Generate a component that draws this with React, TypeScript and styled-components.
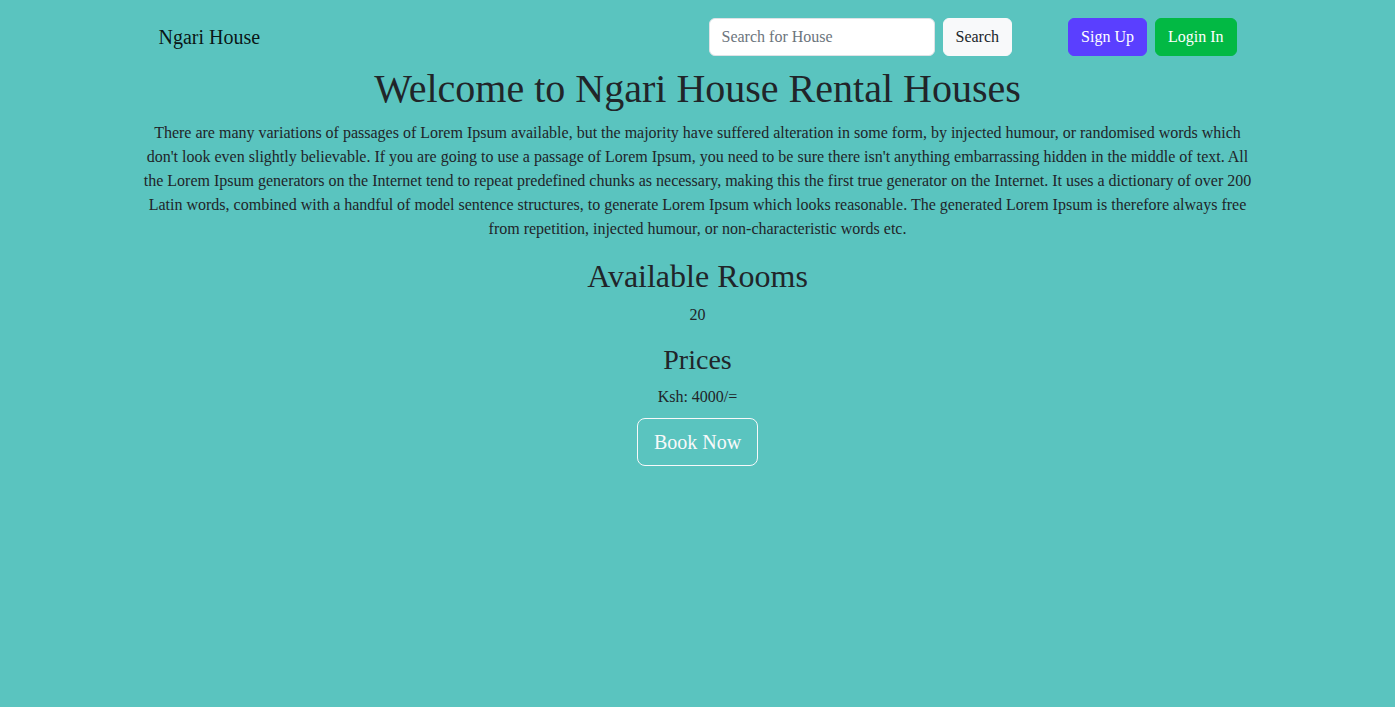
import React from "react";
import styled, { createGlobalStyle } from "styled-components";

const GlobalStyle = createGlobalStyle`
  html, body {
    margin: 0;
    padding: 0;
  }
  body {
    background: #5ac4bf;
    color: #212529;
    font-family: "Liberation Serif", "Times New Roman", serif;
    font-size: 16px;
    line-height: 1.5;
    min-height: 100vh;
  }
  * {
    box-sizing: border-box;
  }
`;

const Navbar = styled.nav`
  padding: 18px 0 9px;
`;

const NavInner = styled.div`
  max-width: 1140px;
  margin: 0 auto;
  padding: 0 31px 0 30px;
  display: flex;
  align-items: center;
`;

const Brand = styled.a`
  font-size: 20px;
  line-height: 30px;
  color: rgba(0, 0, 0, 0.9);
  text-decoration: none;
  margin-left: 1px;
`;

const SearchForm = styled.form`
  display: flex;
  gap: 8px;
  margin-left: auto;
`;

const SearchInput = styled.input`
  width: 226px;
  height: 38px;
  padding: 6px 12px;
  font: inherit;
  color: #212529;
  background: #fff;
  border: 1px solid #dee2e6;
  border-radius: 6px;
  outline: none;

  &::placeholder {
    color: #6c757d;
  }
`;

const Button = styled.button<{ $bg: string; $fg: string }>`
  height: 38px;
  padding: 6px 12px;
  font: inherit;
  line-height: 24px;
  color: ${(p) => p.$fg};
  background: ${(p) => p.$bg};
  border: 1px solid ${(p) => p.$bg};
  border-radius: 6px;
  cursor: pointer;
`;

const AuthGroup = styled.div`
  display: flex;
  gap: 8px;
  margin-left: 56px;
`;

const Main = styled.main`
  max-width: 1140px;
  margin: 0 auto;
  padding: 0 12px;
  text-align: center;
`;

const Title = styled.h1`
  font-size: 40px;
  font-weight: 400;
  line-height: 1.2;
  margin: 0 0 8px;
`;

const Intro = styled.p`
  margin: 0 0 16px;
`;

const SubTitle = styled.h2<{ $size: number }>`
  font-size: ${(p) => p.$size}px;
  font-weight: 400;
  line-height: 1.2;
  margin: 0 0 8px;
`;

const Value = styled.p<{ $gap?: number }>`
  margin: 0 0 ${(p) => p.$gap ?? 16}px;
`;

const BookButton = styled.button`
  font: inherit;
  font-size: 20px;
  line-height: 30px;
  padding: 8px 16px;
  color: #f8f9fa;
  background: transparent;
  border: 1px solid #f8f9fa;
  border-radius: 8px;
  cursor: pointer;
`;

export default function App() {
  return (
    <>
      <GlobalStyle />
      <Navbar>
        <NavInner>
          <Brand href="#">Ngari House</Brand>
          <SearchForm onSubmit={(e) => e.preventDefault()}>
            <SearchInput type="search" placeholder="Search for House" />
            <Button $bg="#f8f9fa" $fg="#212529" type="submit">
              Search
            </Button>
          </SearchForm>
          <AuthGroup>
            <Button $bg="#5a3fff" $fg="#fff">Sign Up</Button>
            <Button $bg="#02b944" $fg="#fff">Login In</Button>
          </AuthGroup>
        </NavInner>
      </Navbar>
      <Main>
        <Title>Welcome to Ngari House Rental Houses</Title>
        <Intro>
          There are many variations of passages of Lorem Ipsum available, but the majority have
          suffered alteration in some form, by injected humour, or randomised words which don't
          look even slightly believable. If you are going to use a passage of Lorem Ipsum, you
          need to be sure there isn't anything embarrassing hidden in the middle of text. All the
          Lorem Ipsum generators on the Internet tend to repeat predefined chunks as necessary,
          making this the first true generator on the Internet. It uses a dictionary of over 200
          Latin words, combined with a handful of model sentence structures, to generate Lorem
          Ipsum which looks reasonable. The generated Lorem Ipsum is therefore always free from
          repetition, injected humour, or non-characteristic words etc.
        </Intro>
        <SubTitle $size={32}>Available Rooms</SubTitle>
        <Value>20</Value>
        <SubTitle $size={28}>Prices</SubTitle>
        <Value $gap={9}>Ksh: 4000/=</Value>
        <BookButton>Book Now</BookButton>
      </Main>
    </>
  );
}
